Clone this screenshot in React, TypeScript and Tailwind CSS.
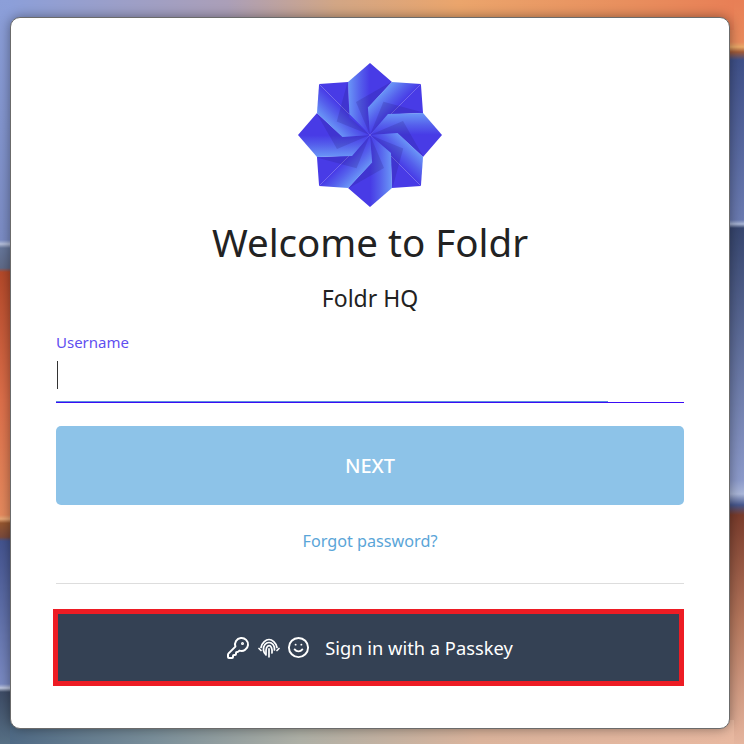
import React from "react";
import { KeyRound, Smile } from "lucide-react";

const ANGLES = [0, 45, 90, 135, 180, 225, 270, 315];

function Logo() {
  return (
    <svg width="146" height="146" viewBox="-73 -73 146 146" className="block">
      <defs>
        <linearGradient id="blade" gradientUnits="userSpaceOnUse" x1="-22" y1="0" x2="0" y2="0">
          <stop offset="0" stopColor="#6a97f7" />
          <stop offset="0.55" stopColor="#5560ec" />
          <stop offset="1" stopColor="#473ae6" />
        </linearGradient>
      </defs>
      {ANGLES.map((a) => (
        <g key={a} transform={`rotate(${a})`}>
          <polygon points="0,-72 22,-53 -2,-27 0,0" fill="#483be6" />
          <polygon points="0,0 -21,-18 -22,-53 0,-72" fill="url(#blade)" />
          <polygon points="0,0 -14,-33 21,-53 -2,-27" fill="#231a7a" opacity="0.2" />
        </g>
      ))}
    </svg>
  );
}

function FingerprintIcon() {
  return (
    <svg width="22" height="20" viewBox="0 0 22 20" fill="none" stroke="currentColor" strokeWidth="1.7" strokeLinecap="round" className="block">
      <path d="M3 9.5C4 4.5 8 1.5 11 1.5C14 1.5 18 4.5 19 9.5" />
      <path d="M1 10.5L3 12.5M21 10.5L19 12.5" />
      <path d="M5.5 12C5 7.5 8 4.5 11 4.5C14 4.5 17 7.5 16.5 12" />
      <path d="M8 16C7.5 10.5 9 7.7 11 7.7C13 7.7 14.5 10.5 14 15" />
      <path d="M11 10.8L11 18.8M5.5 12.5C5.8 14 6.5 15.5 8 17" />
    </svg>
  );
}

function Wallpaper() {
  const H = 744;
  const left: [number, string][] = [
    [0, "#8c9fd9"], [240, "#7b8cc4"], [244, "#b6c0dc"], [248, "#66769a"], [268, "#5f6a88"],
    [272, "#b4492a"], [400, "#dd6f4a"], [515, "#e58a5e"], [519, "#e8a878"], [523, "#96562f"],
    [537, "#7a4a3c"], [541, "#44548f"], [684, "#7a8ac2"], [688, "#c0c8e0"], [692, "#3e4c66"],
    [744, "#566f84"],
  ];
  const right: [number, string][] = [
    [0, "#e87f56"], [42, "#e88a5c"], [47, "#e8a868"], [52, "#a05a38"], [60, "#3f5088"],
    [220, "#6a7ab0"], [224, "#a8b4d4"], [228, "#37466f"], [480, "#8c9aca"], [494, "#aab6d8"],
    [505, "#46568c"], [515, "#7a3c2c"], [620, "#b4765c"], [744, "#e5b59e"],
  ];
  return (
    <svg width="744" height="744" viewBox="0 0 744 744" className="absolute inset-0 block">
      <defs>
        <linearGradient id="l" x1="0" y1="0" x2="0" y2="1">
          {left.map(([y, c]) => (
            <stop key={y} offset={y / H} stopColor={c} />
          ))}
        </linearGradient>
        <linearGradient id="r" x1="0" y1="0" x2="0" y2="1">
          {right.map(([y, c]) => (
            <stop key={y} offset={y / H} stopColor={c} />
          ))}
        </linearGradient>
        <linearGradient id="t" x1="0" y1="0" x2="1" y2="0">
          <stop offset="0" stopColor="#8c9fd9" />
          <stop offset="0.3" stopColor="#ab9fb8" />
          <stop offset="0.45" stopColor="#d2a685" />
          <stop offset="0.62" stopColor="#eba56c" />
          <stop offset="0.85" stopColor="#e88f5e" />
          <stop offset="1" stopColor="#e87f56" />
        </linearGradient>
        <linearGradient id="b" x1="0" y1="0" x2="1" y2="0">
          <stop offset="0" stopColor="#4f6a85" />
          <stop offset="0.2" stopColor="#7a8f9a" />
          <stop offset="0.4" stopColor="#aeb0a6" />
          <stop offset="0.65" stopColor="#dcb49c" />
          <stop offset="1" stopColor="#e8b8a0" />
        </linearGradient>
      </defs>
      <rect x="0" y="0" width="20" height="744" fill="url(#l)" />
      <rect x="724" y="0" width="20" height="744" fill="url(#r)" />
      <rect x="10" y="0" width="724" height="30" fill="url(#t)" />
      <rect x="10" y="720" width="724" height="24" fill="url(#b)" />
    </svg>
  );
}

export default function App() {
  return (
    <div className="relative h-[744px] w-[744px] overflow-hidden pl-[10px] pt-[17px] font-['Noto_Sans',sans-serif]">
      <Wallpaper />
      <div className="relative flex h-[712px] w-[720px] flex-col items-stretch rounded-[10px] border border-[#6b6b6b] bg-white px-[45px] pt-[44px] shadow-[0_0_12px_rgba(0,0,0,0.4)]">
        <div className="flex justify-center">
          <Logo />
        </div>
        <h1 className="mt-[4px] text-center text-[38.5px] leading-[60px] font-normal text-[#222222]">
          Welcome to Foldr
        </h1>
        <p className="mt-[11px] text-center text-[23px] leading-[30px] text-[#222222]">Foldr HQ</p>
        <label className="mt-[17px] text-[15px] leading-[24px] text-[#5f4ff0]">Username</label>
        <div className="relative h-[49px] border-b border-[#3a0cf5]">
          <div className="ml-[1px] mt-[7px] h-[28px] w-[1px] bg-[#333333]" />
          <div className="absolute bottom-0 left-0 h-[1px] w-[552px] bg-[#5b8fe0]" />
        </div>
        <button className="mt-[23px] flex h-[79px] items-center justify-center rounded-[5px] bg-[#8dc3e8] text-[20px] font-medium text-white">
          NEXT
        </button>
        <a className="mt-[24px] text-center text-[16.2px] leading-[24px] text-[#5aa5d8]">Forgot password?</a>
        <div className="mt-[30px] h-[1px] bg-[#dddddd]" />
        <button className="ml-[-3px] mt-[25px] flex h-[77px] items-center justify-center border-[5px] border-[#ed1c24] bg-[#344154] pl-[2px] text-[18.3px] text-white">
          <KeyRound size={24} strokeWidth={2} />
          <span className="ml-[8px]">
            <FingerprintIcon />
          </span>
          <Smile size={23} strokeWidth={2} className="ml-[7px]" />
          <span className="ml-[15px]">Sign in with a Passkey</span>
        </button>
      </div>
    </div>
  );
}
